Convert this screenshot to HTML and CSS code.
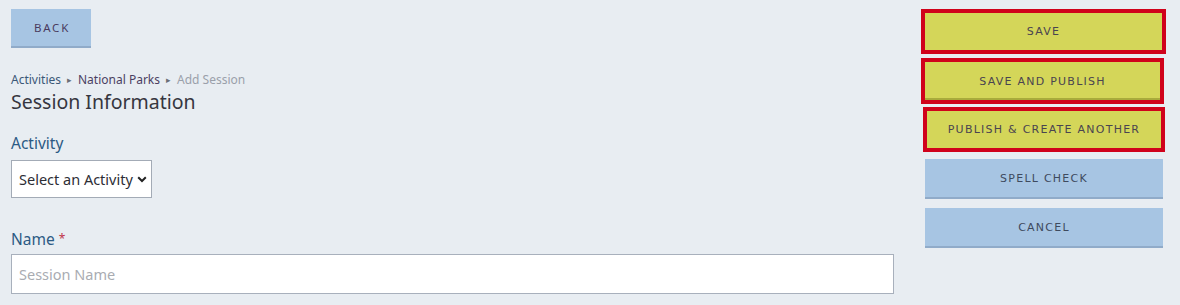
FILE: index.html
```html
<!DOCTYPE html>
<html>
<head>
<meta charset="utf-8">
<link rel="stylesheet" href="styles.css">
</head>
<body>
<div class="page">
  <main class="form-col">
    <button class="btn btn-back">BACK</button>
    <nav class="crumbs">
      <a class="crumb crumb-link">Activities</a>
      <span class="sep">&#9656;</span>
      <a class="crumb crumb-mid">National Parks</a>
      <span class="sep">&#9656;</span>
      <span class="crumb crumb-current">Add Session</span>
    </nav>
    <h1 class="title">Session Information</h1>
    <div class="field field-activity">
      <label class="label">Activity</label>
      <div class="select">
        <span class="select-text">Select an Activity</span>
        <svg class="chev" width="10" height="7" viewBox="0 0 10 7"><path d="M1.2 1.3 L5 5 L8.8 1.3" fill="none" stroke="#222" stroke-width="2"/></svg>
      </div>
    </div>
    <div class="field field-name">
      <label class="label label-name">Name <span class="req">*</span></label>
      <div class="input"><span class="placeholder">Session Name</span></div>
    </div>
  </main>
  <aside class="actions">
    <button class="act act-hl act-save">SAVE</button>
    <button class="act act-hl act-publish">SAVE AND PUBLISH</button>
    <button class="act act-hl act-another">PUBLISH &amp; CREATE ANOTHER</button>
    <button class="act act-plain">SPELL CHECK</button>
    <button class="act act-plain">CANCEL</button>
  </aside>
</div>
</body>
</html>
```

FILE: styles.css
```css
* { box-sizing: border-box; }
html, body { margin: 0; padding: 0; }
body {
  background: #e8edf2;
  font-family: "Noto Sans", "Open Sans", sans-serif;
  width: 1180px;
  height: 305px;
  overflow: hidden;
}
.page {
  display: flex;
  align-items: flex-start;
}
.form-col {
  width: 894px;
  padding: 9px 0 0 11px;
  display: flex;
  flex-direction: column;
  align-items: flex-start;
}
.btn {
  border: 0;
  font-family: inherit;
  cursor: pointer;
}
.btn-back {
  width: 80px;
  height: 39px;
  background: #a7c5e3;
  border-bottom: 2px solid #90abc9;
  color: #4a3b5e;
  font-size: 11.5px;
  letter-spacing: 1.8px;
  padding: 0 0 1px 2px;
}
.crumbs {
  margin-top: 24px;
  display: flex;
  align-items: center;
  gap: 6px;
  font-size: 12px;
  line-height: 16px;
}
.crumb-link { color: #3b5878; }
.crumb-mid { color: #4b3f62; }
.crumb-current { color: #9aa0aa; }
.sep { color: #6b6f78; font-size: 9px; }
.title {
  margin: 1px 0 0;
  font-weight: 400;
  font-size: 19.5px;
  line-height: 26px;
  color: #363640;
}
.field { display: flex; flex-direction: column; align-items: flex-start; }
.field-activity { margin-top: 17px; }
.field-name { margin-top: 30px; }
.label {
  font-size: 15.5px;
  line-height: 22px;
  color: #2c5a84;
  margin-bottom: 6px;
}
.label-name { margin-bottom: 4px; }
.req { color: #c0344a; font-size: 12px; vertical-align: top; }
.select {
  width: 141px;
  height: 38px;
  background: #fff;
  border: 1px solid #a3abb6;
  display: flex;
  align-items: center;
  justify-content: space-between;
  padding: 0 4px 0 7px;
}
.select-text { font-size: 14.5px; color: #2d2d35; }
.chev { margin-top: 1px; }
.input {
  width: 883px;
  height: 40px;
  background: #fff;
  border: 1px solid #a8b0bc;
  display: flex;
  align-items: center;
  padding: 0 7px;
}
.placeholder { font-size: 14.5px; color: #a9acb2; }

.actions {
  display: flex;
  flex-direction: column;
  align-items: flex-start;
  padding-top: 9px;
  margin-left: 27px;
}
.act {
  font-family: "DejaVu Sans", Verdana, sans-serif;
  font-size: 11px;
  letter-spacing: 1.25px;
  color: #4a4450;
  cursor: pointer;
  padding: 0;
}
.act-hl {
  background: #d4d659;
  border: 4px solid #d0021b;
}
.act-save { width: 245px; height: 45px; }
.act-publish { width: 243px; height: 46px; margin-top: 4px; box-shadow: inset 0 -4px 0 -2px #a9ab3c; }
.act-another { width: 242px; height: 45px; margin-top: 3px; margin-left: 2px; }
.act-plain {
  width: 238px;
  height: 40px;
  background: #a7c5e3;
  border: 0;
  border-bottom: 2px solid #90abc9;
  margin-left: 4px;
  color: #3e4a5e;
}
.act-another + .act-plain { margin-top: 7px; }
.act-plain + .act-plain { margin-top: 9px; }
```
